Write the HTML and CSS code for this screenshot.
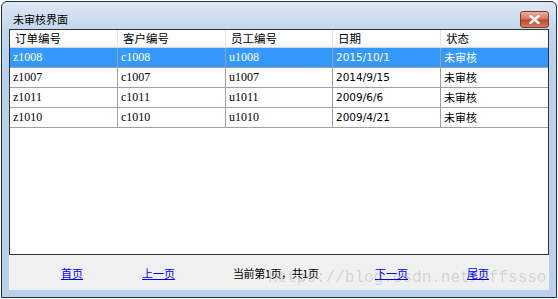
FILE: index.html
```html
<!DOCTYPE html>
<html lang="zh-CN">

<head>
    <meta charset="UTF-8">
    <title>未审核界面</title>
    <link rel="stylesheet" href="styles.css">
</head>

<body>
    <div class="window">
        <div class="titlebar">
            <span class="title">未审核界面</span>
            <button type="button" class="btn-close">
                <svg width="11" height="9" viewBox="0 0 11 9">
                    <path d="M1.5 1 L9.5 8 M9.5 1 L1.5 8" stroke="#fff" stroke-width="2.4" stroke-linecap="square" />
                </svg>
            </button>
        </div>

        <div class="client">
            <div class="grid">
                <div class="grid-row grid-head">
                    <div class="cell">订单编号</div>
                    <div class="cell">客户编号</div>
                    <div class="cell">员工编号</div>
                    <div class="cell">日期</div>
                    <div class="cell">状态</div>
                </div>
                <div class="grid-row selected">
                    <div class="cell code">z1008</div>
                    <div class="cell code">c1008</div>
                    <div class="cell code">u1008</div>
                    <div class="cell date">2015/10/1</div>
                    <div class="cell">未审核</div>
                </div>
                <div class="grid-row">
                    <div class="cell code">z1007</div>
                    <div class="cell code">c1007</div>
                    <div class="cell code">u1007</div>
                    <div class="cell date">2014/9/15</div>
                    <div class="cell">未审核</div>
                </div>
                <div class="grid-row">
                    <div class="cell code">z1011</div>
                    <div class="cell code">c1011</div>
                    <div class="cell code">u1011</div>
                    <div class="cell date">2009/6/6</div>
                    <div class="cell">未审核</div>
                </div>
                <div class="grid-row">
                    <div class="cell code">z1010</div>
                    <div class="cell code">c1010</div>
                    <div class="cell code">u1010</div>
                    <div class="cell date">2009/4/21</div>
                    <div class="cell">未审核</div>
                </div>
            </div>

            <div class="pager">
                <a href="#">首页</a>
                <a href="#">上一页</a>
                <span class="page-info">当前第1页，共1页</span>
                <a href="#">下一页</a>
                <a href="#">尾页</a>
            </div>

            <div class="watermark">https://blog.csdn.net/fffssso</div>
        </div>
    </div>
</body>

</html>
```

FILE: styles.css
```css
body {
    margin: 0;
    background: #fff;
    font-family: "Noto Sans CJK SC", "Liberation Sans", sans-serif;
    font-size: 11px;
    color: #000;
}

.window {
    box-sizing: border-box;
    width: 556px;
    height: 297px;
    margin: 1px 0 0 1px;
    padding: 0 7px 7px 7px;
    border: 1px solid #25323d;
    border-radius: 6px 6px 0 0;
    background: linear-gradient(#dce8f4, #c4d8ed 26px, #b9d1ea 60px, #b9d1ea);
    display: flex;
    flex-direction: column;
}

.titlebar {
    height: 27px;
    display: flex;
    align-items: flex-start;
    justify-content: space-between;
}

.title {
    margin: 10px 0 0 4px;
    line-height: 15px;
}

.btn-close {
    width: 29px;
    height: 17px;
    margin-top: 9px;
    padding: 0;
    border: 1px solid #7a3a32;
    border-radius: 3px;
    background: linear-gradient(#eab0a0, #d77762 45%, #c4452f 55%, #d57a62);
    display: flex;
    align-items: center;
    justify-content: center;
}

.client {
    flex: 1;
    position: relative;
    background: #f0f0f0;
    display: flex;
    flex-direction: column;
    overflow: hidden;
}

.grid {
    height: 226px;
    box-sizing: border-box;
    border: 1px solid #333;
    background: #fff;
}

.grid-row {
    display: grid;
    grid-template-columns: 108px 108px 107px 108px 1fr;
    height: 20px;
}

.cell {
    box-sizing: border-box;
    border-right: 1px solid #a0a0a0;
    border-bottom: 1px solid #a0a0a0;
    padding-left: 3px;
    line-height: 19px;
    white-space: nowrap;
    overflow: hidden;
}

.cell:last-child {
    border-right: none;
}

.grid-head {
    height: 18px;
    font-size: 11.5px;
    background: linear-gradient(#fff, #fff 50%, #f1f2f4);
}

.grid-head .cell {
    line-height: 17px;
    padding-left: 5px;
    border-right-color: #e3e5e8;
    border-bottom: 1px solid #d5d5d5;
}

.code {
    font-family: "Liberation Serif", serif;
    font-size: 12px;
}

.date {
    font-family: "DejaVu Sans", sans-serif;
    font-size: 10.5px;
}

.selected {
    background: #3399ff;
    color: #fff;
}

.pager {
    flex: 1;
    display: grid;
    grid-template-columns: 81px 91px 142px 92px auto;
    align-items: center;
    justify-items: start;
    padding-left: 52px;
}

.pager a {
    color: #00f;
}

.page-info {
    letter-spacing: -0.4px;
}

.watermark {
    position: absolute;
    left: 259px;
    bottom: 3px;
    font-family: "Liberation Mono", monospace;
    font-size: 16px;
    color: rgba(0, 0, 0, 0.14);
    pointer-events: none;
}
```
